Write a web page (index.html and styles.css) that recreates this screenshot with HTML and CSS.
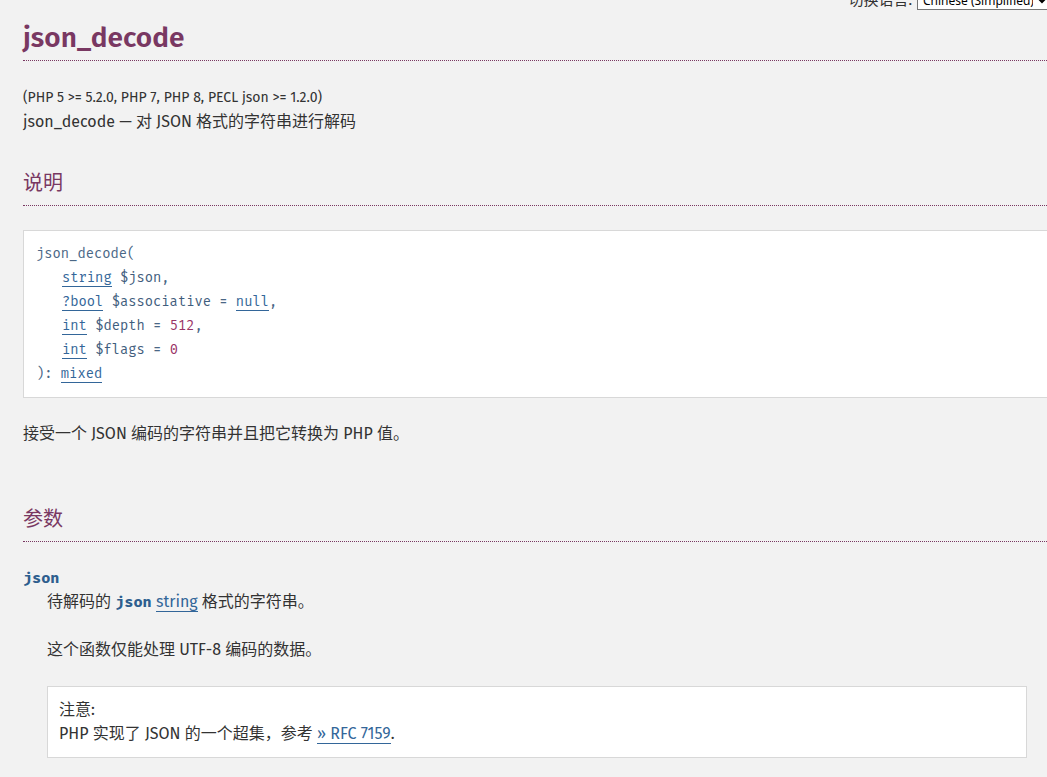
FILE: index.html
```html
<!DOCTYPE html>
<html lang="zh-CN">
<head>
  <meta charset="utf-8">
  <title>PHP: json_decode - Manual</title>
  <link rel="stylesheet" href="styles.css">
</head>
<body>
  <div class="change-lang">
    <label for="lang">切换语言:</label>
    <select id="lang">
      <option>Chinese (Simplified)</option>
    </select>
  </div>

  <div class="refentry">
    <h1 class="refname">json_decode</h1>
    <p class="verinfo">(PHP 5 &gt;= 5.2.0, PHP 7, PHP 8, PECL json &gt;= 1.2.0)</p>
    <p class="refpurpose">json_decode — 对 JSON 格式的字符串进行解码</p>

    <div class="refsect">
      <h2>说明</h2>
      <div class="methodsynopsis">
        <div>json_decode(</div>
        <div class="arg"><a href="#">string</a> <span class="var">$json</span>,</div>
        <div class="arg"><a href="#">?bool</a> <span class="var">$associative</span> = <a href="#">null</a>,</div>
        <div class="arg"><a href="#">int</a> <span class="var">$depth</span> = <span class="val">512</span>,</div>
        <div class="arg"><a href="#">int</a> <span class="var">$flags</span> = <span class="val">0</span></div>
        <div>): <a href="#">mixed</a></div>
      </div>
      <p class="para">接受一个 JSON 编码的字符串并且把它转换为 PHP 值。</p>
    </div>

    <div class="refsect params">
      <h2>参数</h2>
      <dl>
        <dt><code class="parameter">json</code></dt>
        <dd>
          <p class="para">待解码的 <code class="parameter">json</code> <a href="#">string</a> 格式的字符串。</p>
          <p class="para">这个函数仅能处理 UTF-8 编码的数据。</p>
          <div class="note">
            <strong>注意:</strong>
            <p>PHP 实现了 JSON 的一个超集，参考 <a href="#">» RFC 7159</a>.</p>
          </div>
        </dd>
      </dl>
    </div>
  </div>
</body>
</html>
```

FILE: styles.css
```css
html {
  overflow-x: hidden;
}

body {
  margin: 0;
  background-color: #f2f2f2;
  color: #333;
  font-family: "Fira Sans", "Open Sans", "Noto Sans CJK SC", sans-serif;
  font-size: 16px;
  line-height: 24px;
}

a {
  color: #369;
  text-decoration: none;
  border-bottom: 1px solid #369;
}

.change-lang {
  display: flex;
  justify-content: flex-end;
  align-items: center;
  gap: 5px;
  margin-top: -10px;
  height: 20px;
  margin-right: -4px;
  font-size: 15px;
}

.change-lang select {
  font-family: "Noto Sans", sans-serif;
  font-size: 12px;
  height: 20px;
  width: 134px;
  padding: 0 1px;
  border: 1px solid #767676;
  border-radius: 0;
  background: #fff;
  color: #000;
}

.refentry {
  margin-left: 23px;
  width: 1060px;
}

.refname {
  margin: 0;
  padding-top: 8px;
  padding-bottom: 2px;
  font-size: 28px;
  line-height: 40px;
  color: #793862;
  font-weight: 600;
  border-bottom: 1px dotted #793862;
}

.verinfo {
  margin: 25px 0 0;
  font-size: 14px;
  line-height: 24px;
}

.refpurpose {
  margin: 0;
}

.refsect h2 {
  margin: 36px 0 24px;
  padding-bottom: 9px;
  font-size: 20px;
  line-height: 26px;
  font-weight: normal;
  color: #793862;
  border-bottom: 1px dotted #793862;
}

.methodsynopsis {
  background: #fff;
  border: 1px solid #d8d8d8;
  padding: 11px 12px;
  font-family: "Fira Mono", "DejaVu Sans Mono", monospace;
  font-size: 13.8px;
  line-height: 24px;
  color: #4a6786;
}

.methodsynopsis .arg {
  padding-left: 26px;
}

.methodsynopsis .var {
  color: #3f5d7d;
}

.methodsynopsis .val {
  color: #936;
}

.para {
  margin: 24px 0 0;
}

.params h2 {
  margin-top: 60px;
}

dl {
  margin: 0;
}

dt {
  margin-top: 24px;
}

code.parameter {
  font-family: "Fira Mono", "DejaVu Sans Mono", monospace;
  font-weight: bold;
  font-size: 15.2px;
  color: #2e5e8e;
}

dd {
  margin: 0 56px 0 24px;
}

dd .para:first-child {
  margin-top: 0;
}

.note {
  margin-top: 24px;
  background: #fff;
  border: 1px solid #d8d8d8;
  padding: 11px 11px;
}

.note strong {
  display: block;
  font-weight: normal;
}

.note p {
  margin: 0;
}
```
